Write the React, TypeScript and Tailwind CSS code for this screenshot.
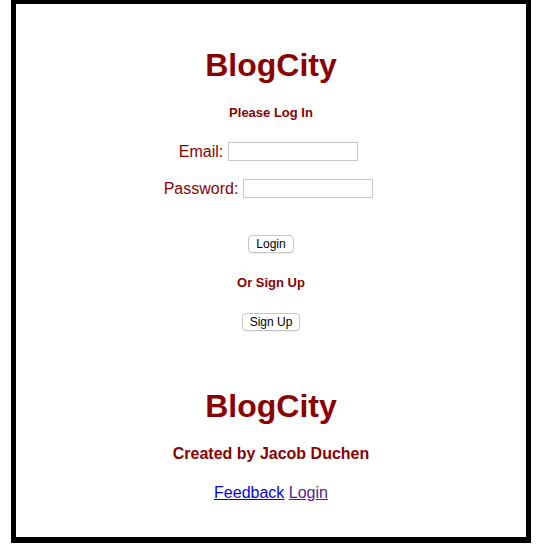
const darkRed = "text-[#8b0000]";

function Field({ label, type }: { label: string; type: string }) {
  return (
    <div className="flex h-[19px] items-center gap-[5px] pr-[5px]">
      <label className={`text-[16px] leading-4 ${darkRed}`}>{label}</label>
      <input
        type={type}
        className="h-[19px] w-[130px] border border-[#c9c9c9] bg-white px-1 text-[13px] outline-none"
      />
    </div>
  );
}

function MacButton({ children, className = "" }: { children: string; className?: string }) {
  return (
    <button
      type="button"
      className={`h-[18px] rounded-[4px] border border-[#c6c6c6] bg-white px-[7px] text-[12px] leading-[16px] text-black shadow-[0_1px_0_rgba(0,0,0,0.06)] ${className}`}
    >
      {children}
    </button>
  );
}

export default function App() {
  return (
    <div className="h-[547px] w-[543px] bg-white font-['Liberation_Sans',Arial,sans-serif]">
      <div className="ml-[11px] flex h-[543px] w-[520px] flex-col items-center border-x-[5px] border-t-4 border-b-[6px] border-black pr-[0px]">
        <h1 className={`mt-[45px] text-[32px] font-bold leading-8 ${darkRed}`}>BlogCity</h1>
        <h5 className={`mt-[24.5px] text-[13px] font-bold leading-[13px] ${darkRed}`}>Please Log In</h5>

        <form className="mt-[23.5px] flex flex-col items-center" onSubmit={(e) => e.preventDefault()}>
          <Field label="Email:" type="email" />
          <div className="mt-[18px]">
            <Field label="Password:" type="password" />
          </div>
          <MacButton className="mt-[37px]">Login</MacButton>
        </form>

        <h5 className={`mt-[23px] text-[13px] font-bold leading-[13px] ${darkRed}`}>Or Sign Up</h5>
        <MacButton className="mt-[24px]">Sign Up</MacButton>

        <h1 className={`mt-[59px] text-[32px] font-bold leading-8 ${darkRed}`}>BlogCity</h1>
        <h4 className={`mt-[23.5px] text-[16px] font-bold leading-4 ${darkRed}`}>Created by Jacob Duchen</h4>

        <p className="mt-[23px] text-[16px] leading-4">
          <a href="#feedback" className="text-[#0000ee] underline">
            Feedback
          </a>{" "}
          <a href="#login" className="text-[#551a8b] underline">
            Login
          </a>
        </p>
      </div>
    </div>
  );
}
